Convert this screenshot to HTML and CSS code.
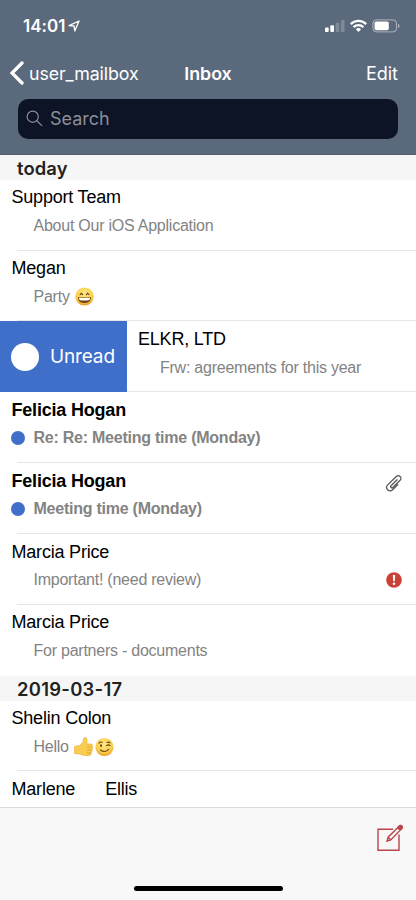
FILE: index.html
```html
<!DOCTYPE html>
<html lang="en">
<head>
<meta charset="utf-8">
<meta name="viewport" content="width=device-width, initial-scale=1">
<title>Inbox</title>
<link rel="stylesheet" href="styles.css">
</head>
<body>
<div class="phone">
  <header class="top">
    <div class="status">
      <span class="clock">14:01</span>
      <svg class="location" width="12" height="12" viewBox="0 0 12 12"><path d="M1 5.7 11 1 6.8 11 6.1 6z" fill="none" stroke="#fff" stroke-width="1.3" stroke-linejoin="round"/></svg>
      <svg class="indicators" width="76" height="14" viewBox="0 0 76 14" fill="#fff">
        <rect x="0" y="8.5" width="3.7" height="4.5" rx="1"/><rect x="5.3" y="6.3" width="3.7" height="6.7" rx="1"/>
        <g opacity=".22"><rect x="10.6" y="3.8" width="3.7" height="9.2" rx="1"/><rect x="15.9" y="1" width="3.7" height="12" rx="1"/></g>
        <g fill="none" stroke="#fff" stroke-width="2.2"><path d="M25.7 5.1a11 11 0 0 1 15.5 0"/><path d="M28.5 8.1a7 7 0 0 1 9.9 0"/></g>
        <path d="M30.8 10.2a3.8 3.8 0 0 1 5.3 0L33.5 13z"/>
        <rect x="47.9" y=".9" width="23.6" height="12" rx="3.4" fill="none" stroke="#fff" stroke-opacity=".5" stroke-width="1"/>
        <rect x="49.5" y="2.5" width="14.3" height="8.8" rx="1.7"/><path d="M73 4.7q1.5.8 1.5 2.2T73 9.1z" opacity=".55"/>
      </svg>
    </div>
    <nav class="nav">
      <a class="back"><svg width="14" height="24" viewBox="0 0 14 24"><path d="M12 2 2 12l10 10" fill="none" stroke="#fff" stroke-width="3.3" stroke-linecap="round" stroke-linejoin="miter"/></svg><span class="mailbox">user_mailbox</span></a>
      <h1 class="title">Inbox</h1>
      <a class="edit">Edit</a>
    </nav>
    <div class="search">
      <svg width="17" height="17" viewBox="0 0 17 17" fill="none" stroke="#8e8e98" stroke-width="1.2" stroke-linecap="round"><circle cx="6.7" cy="6.7" r="5.6"/><path d="m10.8 10.8 5 4.8"/></svg>
      <span>Search</span>
    </div>
  </header>
  <main class="list">
    <h2 class="section"><span>today</span></h2>
    <article class="row"><div class="name"><span>Support Team</span></div><div class="subject"><span>About Our iOS Application</span></div></article>
    <article class="row"><div class="name"><span>Megan</span></div><div class="subject"><span>Party</span>
      <svg class="emoji" width="19" height="19" viewBox="0 0 19 19"><defs><radialGradient id="face" cx=".5" cy=".35" r=".65"><stop offset="0" stop-color="#ffe98a"/><stop offset=".7" stop-color="#f9ce4b"/><stop offset="1" stop-color="#e59a28"/></radialGradient></defs><circle cx="9.5" cy="9.5" r="9.1" fill="url(#face)"/><g fill="none" stroke="#67400f" stroke-width="1.1" stroke-linecap="round"><path d="m5.1 7.6 1.3-1.3 1.3 1.3M11.3 7.6l1.3-1.3 1.3 1.3"/></g><path d="M2.9 9.9q6.6 1.1 13.2 0-.6 6.2-6.6 6.2T2.9 9.9z" fill="#70430d"/><path d="M3.9 10.7q5.6.8 11.2 0-.2 2-1 2.6-4.6.6-9.2 0-.8-.7-1-2.6z" fill="#fff"/></svg></div></article>
    <article class="row swiped">
      <div class="action"><i class="disc"></i><span>Unread</span></div>
      <div class="message"><div class="name"><span>ELKR, LTD</span></div><div class="subject"><span>Frw: agreements for this year</span></div></div>
    </article>
    <article class="row unread"><div class="name"><span>Felicia Hogan</span></div><div class="subject"><i class="dot"></i><span>Re: Re: Meeting time (Monday)</span></div></article>
    <article class="row unread"><div class="name"><span>Felicia Hogan</span>
      <svg class="clip" width="18" height="18" viewBox="0 0 18 18" fill="none" stroke="#555" stroke-width="1.25" stroke-linecap="round"><path d="m12.1 5.7-6 6a1.2 1.2 0 0 0 1.8 1.8l7.2-7.2a2.6 2.6 0 0 0-3.8-3.8L2.7 10.9a3.4 3.4 0 0 0 4.9 4.9l5.2-5.2"/></svg></div><div class="subject"><i class="dot"></i><span>Meeting time (Monday)</span></div></article>
    <article class="row"><div class="name"><span>Marcia Price</span></div><div class="subject"><span>Important! (need review)</span>
      <svg class="alert" width="16" height="16" viewBox="0 0 16 16"><circle cx="8" cy="8" r="7.8" fill="#ca4236"/><path d="M6.8 3h2.4l-.4 6.2H7.2z" fill="#fff"/><circle cx="8" cy="11.8" r="1.3" fill="#fff"/></svg></div></article>
    <article class="row last"><div class="name"><span>Marcia Price</span></div><div class="subject"><span>For partners - documents</span></div></article>
    <h2 class="section date"><span>2019-03-17</span></h2>
    <article class="row"><div class="name"><span>Shelin Colon</span></div><div class="subject"><span>Hello</span>
      <svg class="emoji" width="40" height="20" viewBox="0 0 40 20"><path d="M.5 9.8Q1 9 3.2 9q3 0 4.7-2.5Q9.3 4.7 9.4 2.4 9.5.5 11.2.6q2 .2 1.9 3.7L12.8 7H17q1.8.2 1.7 1.7 0 .9-.7 1.3 1 .7.6 1.9-.2.8-.9 1.1.7.8.2 1.9-.3.7-.9.9.5.8 0 1.7-.6 1-2.3 1.1-4.3.4-7.6-1-2-.9-4.4-.8H.6z" fill="#f9cd50" stroke="#e9a62e" stroke-width=".6"/><path d="M13 10h4.8M12.8 13h4.8M12.8 16h4" stroke="#dd9428" stroke-width=".7" fill="none"/><circle cx="30.5" cy="10" r="9.1" fill="url(#face)"/><g fill="none" stroke="#70450e" stroke-width="1.1" stroke-linecap="round"><path d="M25 6.1q1.5-1.7 3.2-.7M32.4 8.6q2-1.4 3.8.1M26.5 13q4 3.4 8.2-.7M33 5.5q1.8-.8 3 .3"/></g><ellipse cx="27" cy="8.7" rx="1" ry="1.4" fill="#70450e"/></svg></div></article>
    <article class="row cut"><div class="name"><span>Marlene</span><span class="surname">Ellis</span></div></article>
  </main>
  <footer class="toolbar">
    <svg class="compose" width="28" height="28" viewBox="0 0 28 28" fill="none" stroke="#b8474c" stroke-width="1.4"><path d="M17 5.2H2v21h21V10.5"/><path d="m11 17.2 1.1-4L23.4 1.9q1.1-1 2.3.1 1.2 1.2.2 2.4L14.8 15.9zM21.6 3.7l2.6 2.6M12.3 13.4l2.4 2.4"/><path d="m22.3 3 1.4-1.4q1.1-.6 2.1.3 1 1.2.1 2.4l-1.2 1.3z" fill="#b8474c"/></svg>
    <div class="home"></div>
  </footer>
</div>
</body>
</html>
```
FILE: styles.css
```css
* { box-sizing: border-box; }
body { margin: 0; background: #fff; font-family: "Liberation Sans", Arial, sans-serif; }
.phone { width: 416px; height: 900px; display: flex; flex-direction: column; overflow: hidden; }
svg { flex: none; display: block; }
span { white-space: nowrap; }

.top { height: 155px; flex: none; background: #5b697c; color: #fff; font-family: Inter, sans-serif; border-bottom: 1px solid #556074; }
.status { height: 51px; display: flex; align-items: center; padding: 0 15px 0 23px; }
.clock { font-size: 17px; font-weight: 600; letter-spacing: 0.05px; }
.location { margin-left: 2px; }
.indicators { margin-left: auto; }
.nav { height: 44px; display: grid; grid-template-columns: 1fr auto 1fr; align-items: center; padding: 0 18px; }
.back { display: flex; align-items: center; gap: 5px; margin-left: -8px; }
.mailbox { font-size: 17.8px; letter-spacing: -0.1px; }
.edit { font-size: 18px; }
.title { margin: 0; font-size: 17.8px; font-weight: 600; }
.edit { justify-self: end; }
.search { height: 40px; margin: 4px 18px 0; padding: 0 0 2px 8px; border-radius: 10px; background: #0c1426; color: #8e8e98; display: flex; align-items: center; gap: 7px; font-size: 18px; }

.list { height: 652px; flex: none; overflow: hidden; }
.section { height: 24.8px; margin: 0; padding: 0 0 0 17px; background: #f6f6f6; color: #222; font: 600 18.4px/26px Inter, sans-serif; letter-spacing: 0.1px; }
.date { letter-spacing: 0.3px; }
.row { height: 70.85px; position: relative; padding: 5px 14px 0 11.5px; }
.row::after { content: ""; position: absolute; left: 17px; right: 0; bottom: 0; height: 1px; background: #e6e6e8; }
.row.last::after, .row.cut::after { display: none; }
.name { height: 26px; display: flex; align-items: center; font-size: 18px; letter-spacing: -0.2px; color: #000; }
.subject { height: 30.5px; display: flex; align-items: center; padding-left: 22px; font-size: 16px; letter-spacing: -0.24px; color: #838383; }
.unread .name, .unread .subject { font-weight: 700; }
.unread .subject { height: 30px; padding-left: 0; }
.dot { width: 14px; height: 14px; margin: 0 8.5px 0 -0.5px; border-radius: 50%; background: #3f6fc8; }
.clip { margin: 4px -1px 0 auto; }
.alert { margin-left: auto; }
.emoji { margin-left: 5.5px; }
.surname { margin-left: 30px; }

.swiped { display: flex; padding: 0; }
.action { width: 127px; height: 100%; z-index: 1; background: #3f6fc8; color: #fff; display: flex; align-items: center; padding: 0 0 0 11px; font: 19px Inter, sans-serif; letter-spacing: -0.15px; }
.disc { width: 28px; height: 28px; margin-right: 11px; border-radius: 50%; background: #fff; }
.message { padding: 5px 0 0 11px; }

.toolbar { height: 93px; border-top: 1px solid #dcdcde; background: #f8f8f8; display: flex; flex-direction: column; align-items: center; justify-content: space-between; padding: 16px 12px 9px; }
.compose { align-self: flex-end; }
.home { width: 149px; height: 5px; border-radius: 3px; background: #000; }
```
